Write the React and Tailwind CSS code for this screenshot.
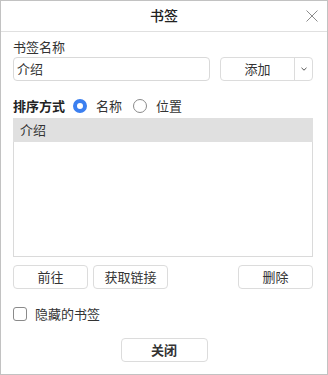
// Bookmark dialog — 书签

import React, { useState } from 'react';

const FONT = { fontFamily: '"Noto Sans CJK SC", "Noto Sans", sans-serif' };

function Btn({ children, className = '', bold }) {
  return (
    <button
      type="button"
      className={
        'h-[24px] rounded-[4px] border border-[#dcdcdc] bg-white text-[13px] text-[#333] flex items-center justify-center ' +
        (bold ? 'font-bold ' : '') +
        className
      }
    >
      {children}
    </button>
  );
}

function Radio({ checked, label, onClick }) {
  return (
    <label className="flex items-center cursor-pointer" onClick={onClick}>
      {checked ? (
        <span className="w-[14px] h-[14px] rounded-full border-[4px] border-[#3b7ff0] bg-white" />
      ) : (
        <span className="w-[14px] h-[14px] rounded-full border border-[#8a8a8a] bg-white" />
      )}
      <span className="ml-[9px] text-[13px] text-[#333]">{label}</span>
    </label>
  );
}

export default function App() {
  const [sort, setSort] = useState('name');
  const [hidden, setHidden] = useState(false);

  return (
    <div
      style={FONT}
      className="w-[328px] h-[375px] border border-[#c2c2c2] bg-white flex flex-col text-[#333]"
    >
      {/* Title bar */}
      <div className="h-[31px] border-b border-[#e0e0e0] flex items-center justify-center relative shrink-0">
        <span className="text-[14px] font-medium text-[#222] -mt-[1px]">书签</span>
        <svg
          className="absolute right-[9px] top-[9px]"
          width="12"
          height="12"
          viewBox="0 0 12 12"
          fill="none"
          stroke="#8c8c8c"
          strokeWidth="1"
        >
          <path d="M0.5 0.5 L11.5 11.5 M11.5 0.5 L0.5 11.5" />
        </svg>
      </div>

      <div className="pl-[12px] pr-[14px] flex flex-col">
        <div className="mt-[6px] h-[18px] leading-[18px] text-[13px]">书签名称</div>

        {/* Name + add */}
        <div className="mt-[1px] flex items-center gap-[10px]">
          <div className="w-[197px] h-[24px] rounded-[4px] border border-[#d9d9d9] flex items-center pl-[3px] text-[13px]">
            介绍
          </div>
          <div className="w-[93px] h-[24px] rounded-[4px] border border-[#dcdcdc] flex">
            <div className="flex-1 flex items-center justify-center text-[13px] border-r border-[#dcdcdc]">
              添加
            </div>
            <div className="w-[17px] flex items-center justify-center">
              <svg width="6" height="4" viewBox="0 0 6 4" fill="none" stroke="#555" strokeWidth="1">
                <path d="M0.5 0.8 L3 3.2 L5.5 0.8" />
              </svg>
            </div>
          </div>
        </div>

        {/* Sort */}
        <div className="mt-[15px] h-[20px] flex items-center">
          <span className="text-[13px] font-bold text-[#222] mr-[8px]">排序方式</span>
          <Radio checked={sort === 'name'} label="名称" onClick={() => setSort('name')} />
          <span className="w-[11px]" />
          <Radio checked={sort === 'pos'} label="位置" onClick={() => setSort('pos')} />
        </div>

        {/* List */}
        <div className="mt-[2px] h-[139px] border border-[#dadada] border-t-0 flex flex-col">
          <div className="h-[24px] -mx-[1px] bg-[#e0e0e0] flex items-center pl-[7px] text-[13px]">
            介绍
          </div>
        </div>

        {/* Actions */}
        <div className="mt-[8px] flex items-center">
          <Btn className="w-[75px]">前往</Btn>
          <Btn className="w-[75px] ml-[5px]">获取链接</Btn>
          <Btn className="w-[75px] ml-auto">删除</Btn>
        </div>

        {/* Hidden bookmarks */}
        <label
          className="mt-[15px] h-[20px] flex items-center cursor-pointer"
          onClick={() => setHidden(!hidden)}
        >
          <span
            className={
              'w-[14px] h-[14px] rounded-[3px] border ' +
              (hidden ? 'border-[#3b7ff0] bg-[#3b7ff0]' : 'border-[#8a8a8a] bg-white')
            }
          />
          <span className="ml-[8px] text-[13px]">隐藏的书签</span>
        </label>

        <div className="mt-[14px] flex justify-center">
          <Btn bold className="w-[87px] ml-[2px]">关闭</Btn>
        </div>
      </div>
    </div>
  );
}
